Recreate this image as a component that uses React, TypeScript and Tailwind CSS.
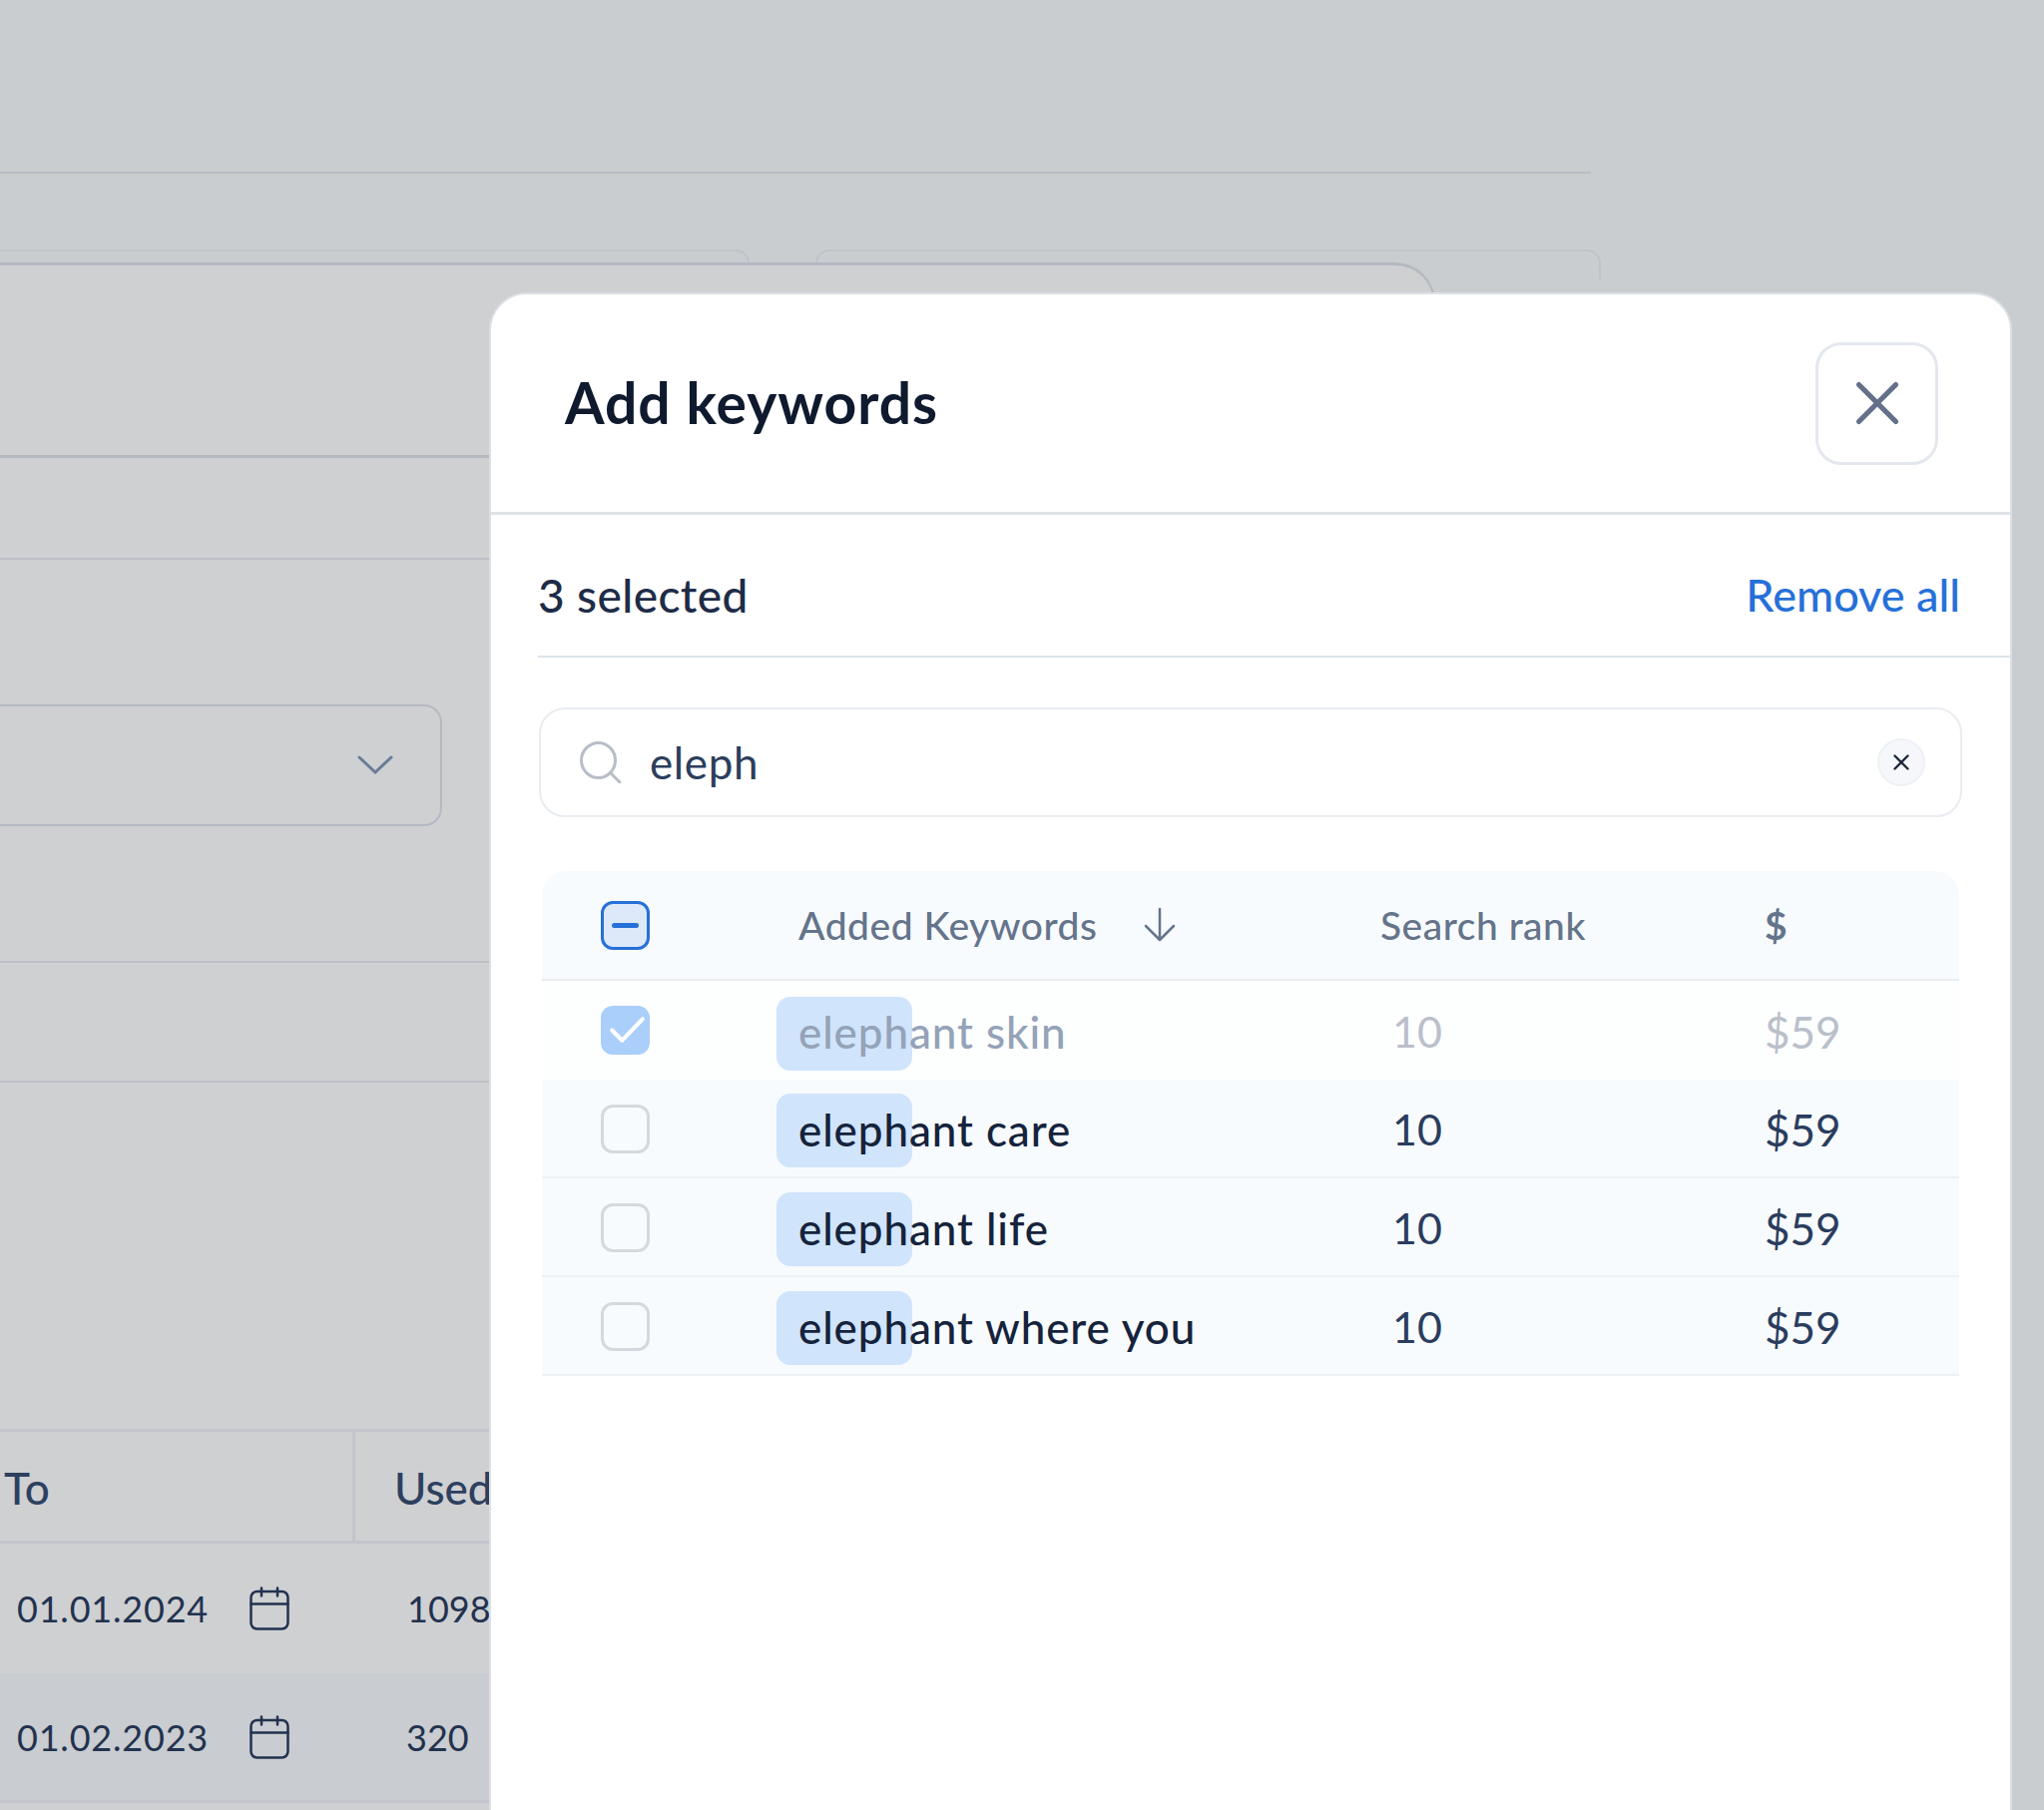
import { X } from 'lucide-react';

interface Keyword {
  name: string;
  checked?: boolean;
}

const keywords: Keyword[] = [
  { name: 'elephant skin', checked: true },
  { name: 'elephant care' },
  { name: 'elephant life' },
  { name: 'elephant where you' },
];

function CalendarIcon() {
  return (
    <svg width="40" height="44" viewBox="0 0 40 44" fill="none" stroke="#22324f" strokeWidth="2.5" strokeLinecap="round">
      <rect x="1.5" y="5" width="37" height="37.5" rx="6" />
      <path d="M1.5 17.5h37M12 1.5v8M28 1.5v8" />
    </svg>
  );
}

function Checkbox({ state }: { state: 'none' | 'checked' | 'partial' }) {
  if (state === 'partial') {
    return (
      <div className="flex h-[49px] w-[49px] items-center justify-center rounded-[12px] border-[3px] border-[#2670d9] bg-[#dde9f8]">
        <div className="h-[5px] w-[27px] rounded-full bg-[#2670d9]" />
      </div>
    );
  }
  if (state === 'checked') {
    return (
      <div className="h-[49px] w-[49px] rounded-[12px] bg-[#a9cffa]">
        <svg width="49" height="49" viewBox="0 0 48 48" fill="none" stroke="#ffffff" strokeWidth="4" strokeLinecap="round" strokeLinejoin="round">
          <path d="M11 24l10 10 20-21" />
        </svg>
      </div>
    );
  }
  return <div className="h-[49px] w-[49px] rounded-[12px] border-[3px] border-[#d5d9df]" />;
}

function KeywordRow({ item, index }: { item: Keyword; index: number }) {
  const dim = item.checked;
  return (
    <div
      className={`grid grid-cols-[258px_582px_385px_1fr] items-center ${
        index === 0 ? 'h-[99px] bg-[#fdfefe]' : 'h-[99px] border-b-2 border-[#edf1f5] bg-[#f8fbfd]'
      }`}
    >
      <div className={index === 0 ? 'pl-[59px]' : 'pl-[59px] pt-[2px]'}>
        <Checkbox state={item.checked ? 'checked' : 'none'} />
      </div>
      <div className={`relative pt-[3px] text-[44px] font-medium leading-[50px] tracking-[0.9px] ${dim ? 'text-[#94a3b8]' : 'text-[#15233c]'}`}>
        <div className={`absolute left-[-23px] h-[74px] w-[136px] rounded-[14px] bg-[#d0e4fb] ${index === 0 ? 'top-[-7px]' : 'top-[-8px]'}`} />
        <span className="relative ml-[-1px]">{item.name}</span>
      </div>
      <div className={`pl-[12px] pt-[3px] text-[43px] leading-[50px] ${dim ? 'text-[#b9c0ca]' : 'text-[#2a3d5e]'}`}>10</div>
      <div className={`pt-[3px] text-[44px] leading-[50px] ${dim ? 'text-[#b9c0ca]' : 'text-[#2a3d5e]'}`}>$59</div>
    </div>
  );
}

export default function App() {
  return (
    <div className="relative h-[1814px] w-[2048px] overflow-hidden bg-[#cacdd0] font-[Lato,sans-serif]">
      {/* page behind the dialog */}
      <div className="h-[174px] w-[1594px] border-b-2 border-[#b9bec5]" />
      <div className="mt-[76px] flex h-[30px]">
        <div className="w-[751px] rounded-tr-[14px] border-r-2 border-t-2 border-[#bfc3ca]" />
        <div className="ml-[66px] w-[787px] rounded-t-[14px] border-x-2 border-t-2 border-[#bfc3ca]" />
      </div>
      <div className="relative mt-[-17px] h-[1551px] w-[1438px] rounded-tr-[40px] border-r-2 border-t-[3px] border-[#b4b9c1] bg-[#cfd0d2]">
        <div className="h-[193px] border-b-[3px] border-[#b4b8bf]" />
        <div className="h-[102px] border-b-2 border-[#bdc1c8]" />
        <div className="mt-[145px] flex h-[122px] w-[443px] items-center justify-end rounded-br-[18px] rounded-tr-[18px] border-y-2 border-r-2 border-[#b5bac3] pr-[47px]">
          <svg width="36" height="20" viewBox="0 0 36 20" fill="none" stroke="#6a7c98" strokeWidth="3" strokeLinecap="round">
            <path d="M2 2l16 15L34 2" />
          </svg>
        </div>
        <div className="mt-[135px] h-[2px] bg-[#bcc0c7]" />
        <div className="mt-[118px] h-[2px] bg-[#bcc0c7]" />
        <div className="mt-[347px] flex h-[115px] border-y-[3px] border-[#c2c5cb]">
          <div className="flex w-[356px] items-center border-r-[3px] border-[#c2c5cb] pl-[4px] pt-[3px] text-[44px] font-medium text-[#2d405f]">To</div>
          <div className="flex items-center pl-[39px] pt-[3px] text-[44px] font-medium text-[#2d405f]">Used</div>
        </div>
        <div className="flex h-[130px] items-center text-[36px] text-[#22324f]">
          <span className="ml-[17px] w-[233px] tracking-[0.8px]">01.01.2024</span>
          <CalendarIcon />
          <span className="ml-[118px]">1098</span>
        </div>
        <div className="flex h-[130px] items-center border-b-[3px] border-[#c2c5cb] bg-[#c9ccd0] text-[36px] text-[#22324f]">
          <span className="ml-[17px] w-[233px] tracking-[0.8px]">01.02.2023</span>
          <CalendarIcon />
          <span className="ml-[117px]">320</span>
        </div>
      </div>

      {/* dialog */}
      <div className="absolute left-[490px] top-[293px] h-[1600px] w-[1526px] rounded-t-[38px] border-2 border-[#dbe0e7] bg-white">
        <div className="flex h-[221px] items-center justify-between border-b-[3px] border-[#dfe3e9] pl-[74px] pr-[72px]">
          <h1 className="mt-[-2px] text-[57px] font-bold leading-none tracking-[1px] text-[#0f1a2e]">Add keywords</h1>
          <button className="flex h-[123px] w-[123px] items-center justify-center rounded-[26px] border-[3px] border-[#e4e8ee]">
            <X size={74} strokeWidth={1.7} color="#64708a" />
          </button>
        </div>
        <div className="ml-[47px] flex h-[143px] items-center justify-between border-b-2 border-[#dde3ec] pr-[50px] pt-[20px] font-medium">
          <span className="text-[46px] tracking-[0.4px] text-[#1e2c47]">3 selected</span>
          <span className="text-[45px] text-[#2670d9]">Remove all</span>
        </div>
        <div className="ml-[48px] mt-[50px] flex h-[110px] w-[1426px] items-center rounded-[26px] border-2 border-[#e8ecf1] pl-[39px] pr-[35px]">
          <svg width="42" height="42" viewBox="0 0 42 42" fill="none" stroke="#b8bec8" strokeWidth="3" strokeLinecap="round">
            <ellipse cx="18.5" cy="19" rx="17" ry="17.5" />
            <path d="M31 32l9 9" />
          </svg>
          <span className="ml-[28px] flex-1 text-[44px] leading-none tracking-[0.6px] text-[#2c3e5c]">eleph</span>
          <div className="flex h-[48px] w-[48px] items-center justify-center rounded-full border-2 border-[#eef1f5] bg-[#f5f7fa]">
            <X size={26} strokeWidth={2.2} color="#1e2838" />
          </div>
        </div>
        <div className="ml-[51px] mt-[54px] w-[1420px]">
          <div className="grid h-[110px] grid-cols-[258px_582px_385px_1fr] items-center rounded-t-[24px] border-b-2 border-[#e9edf2] bg-[#f8fbfd] text-[39px] font-medium tracking-[0.5px] text-[#64748b]">
            <div className="pl-[59px]">
              <Checkbox state="partial" />
            </div>
            <div className="ml-[-1px] flex items-center">
              <span>Added Keywords</span>
              <svg className="ml-[46px]" width="34" height="36" viewBox="0 0 34 36" fill="none" stroke="#64748b" strokeWidth="2.5" strokeLinecap="round" strokeLinejoin="round">
                <path d="M17 2v31M3 19l14 14 14-14" />
              </svg>
            </div>
            <div>Search rank</div>
            <div className="font-bold">$</div>
          </div>
          {keywords.map((item, i) => (
            <KeywordRow key={item.name} item={item} index={i} />
          ))}
        </div>
      </div>
    </div>
  );
}
